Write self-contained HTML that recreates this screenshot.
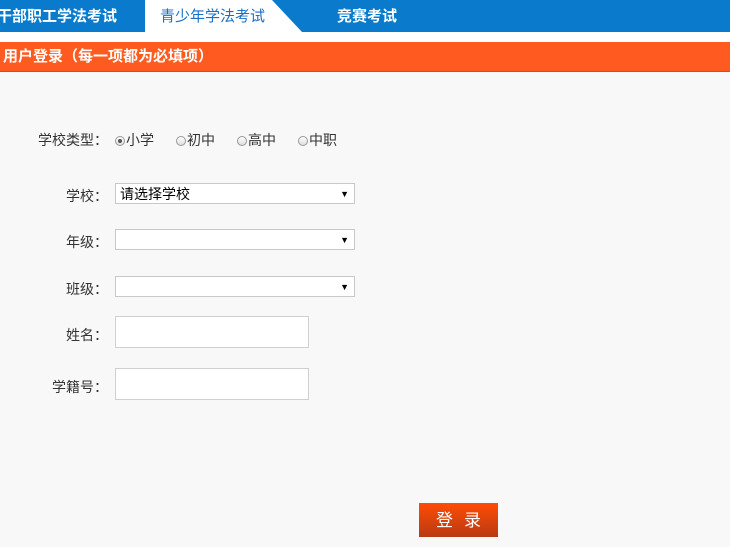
<!DOCTYPE html>
<html><head><meta charset="utf-8"><style>
body{margin:0;width:730px;height:547px;background:#f8f8f8;font-family:"Liberation Sans","Noto Sans CJK SC",sans-serif;position:relative;overflow:hidden;font-size:14px;color:#333}
.nav{position:absolute;left:0;top:0;width:730px;height:32px;background:#0a7bcc}
.t{position:absolute;top:0;height:32px;line-height:34px;font-size:15px;font-weight:bold;color:#fff}
.bar{position:absolute;left:0;top:32px;width:730px;height:10px;background:#fff}
.hd{position:absolute;left:0;top:42px;width:730px;height:29px;background:#ff5a1f;color:#fff;font-weight:bold;font-size:15px;line-height:29px;border-bottom:1px solid #e04a10}
.l{position:absolute;font-size:14px;color:#333;text-align:right;width:100px;left:8px}
.sel{position:absolute;left:115px;background:#fff;border:1px solid #c8c8c8;font-size:14px;line-height:21px;padding-left:4px;box-sizing:border-box;width:240px;height:21px;color:#000}
.sel:after{content:"▼";position:absolute;right:5px;top:0;font-size:9px;color:#000}
.in{position:absolute;left:115px;width:194px;height:32px;background:#fff;border:1px solid #d0d0d0;box-sizing:border-box}
.r{display:inline-block;width:10px;height:10px;border-radius:50%;border:1px solid #999;background:linear-gradient(#fff,#ddd);vertical-align:-1px;margin-right:1px;box-sizing:border-box;position:relative}
.r.on:after{content:"";position:absolute;left:2px;top:2px;width:4px;height:4px;border-radius:50%;background:#555}
.g{display:inline-block;width:22px}
</style></head><body>
<div class="nav"></div>
<svg style="position:absolute;left:0;top:0" width="730" height="32"><polygon points="145,0 272,0 302,32 145,32" fill="#fff"/></svg>
<div class="t" style="left:-3px">干部职工学法考试</div>
<div class="t" style="left:160px;color:#1a6fc6;font-weight:normal">青少年学法考试</div>
<div class="t" style="left:337px">竞赛考试</div>
<div class="bar"></div>
<div class="hd"><span style="padding-left:3px">用户登录（每一项都为必填项）</span></div>
<div class="l" style="top:130px">学校类型：</div>
<div style="position:absolute;left:115px;top:130px;font-size:14px"><span class="r on"></span>小学<span class="g"></span><span class="r"></span>初中<span class="g"></span><span class="r"></span>高中<span class="g"></span><span class="r"></span>中职</div>
<div class="l" style="top:186px">学校：</div>
<div class="sel" style="top:183px">请选择学校</div>
<div class="l" style="top:232px">年级：</div>
<div class="sel" style="top:229px"></div>
<div class="l" style="top:279px">班级：</div>
<div class="sel" style="top:276px"></div>
<div class="l" style="top:325px">姓名：</div>
<div class="in" style="top:316px"></div>
<div class="l" style="top:377px">学籍号：</div>
<div class="in" style="top:368px"></div>
<div style="position:absolute;left:419px;top:503px;width:79px;height:34px;background:linear-gradient(#ff4c05,#b83a12);color:#fff;font-size:17px;line-height:36px;text-align:center;letter-spacing:11px;text-indent:11px">登录</div>
</body></html>
